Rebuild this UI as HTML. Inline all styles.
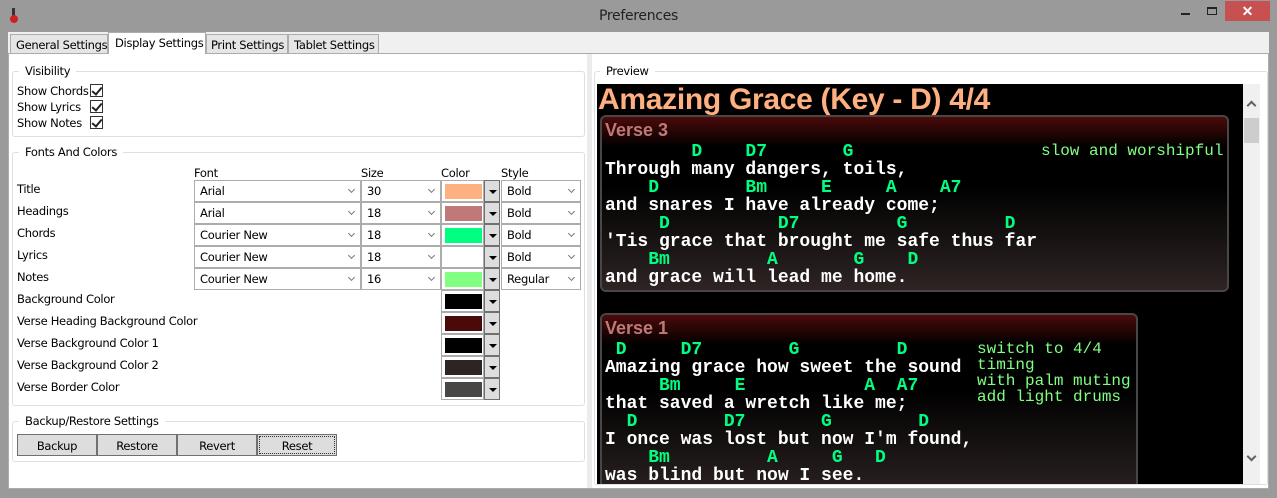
<!DOCTYPE html>
<html><head><meta charset="utf-8"><style>
*{margin:0;padding:0;box-sizing:border-box}
body{width:1277px;height:498px;background:#9a9a9a;position:relative;overflow:hidden;font-family:"Liberation Sans",sans-serif;font-size:12px;color:#000}
.a{position:absolute}
.ui{font-family:"DejaVu Sans","Liberation Sans",sans-serif;font-size:11.5px;letter-spacing:-0.3px;white-space:nowrap}
.grp{position:absolute;border:1px solid #dcdfe3;border-radius:3px}
.gl{position:absolute;background:#fff;padding:0 6px}
.cb{position:absolute;width:13px;height:13px;border:1px solid #333;background:#fff}
.cb::after{content:"";position:absolute;left:3px;top:0px;width:4px;height:8px;border:solid #222;border-width:0 2px 2px 0;transform:rotate(40deg)}
.combo{position:absolute;height:22px;border:1px solid #acacac;background:#fff;padding:3px 5px}
.combo::after{content:"";position:absolute;right:6px;top:6px;width:4px;height:4px;border:solid #777;border-width:0 1px 1px 0;transform:rotate(45deg)}
.sw{position:absolute;width:43px;height:22px;border:1px solid #acacac;background:#fff}
.sw i{position:absolute;left:3px;top:3px;width:37px;height:15px}
.dd{position:absolute;width:16px;height:22px;border:1px solid #707070;background:#ddd}
.dd::after{content:"";position:absolute;left:4px;top:9px;border:4px solid transparent;border-top:4px solid #000;border-bottom:0}
.btn{position:absolute;top:434px;height:22px;width:80px;border:1px solid #707070;background:#ddd;text-align:center;padding-top:4px}
.mono{font-family:"Liberation Mono",monospace;font-weight:bold;font-size:18px;line-height:18px;white-space:pre;color:#fff}
.ch{color:#00ff80}
.note{font-family:"Liberation Mono",monospace;font-size:16px;line-height:16px;white-space:pre;color:#80ff80}
.verse{position:absolute;border:2px solid #4a4646;border-radius:6px;background:linear-gradient(#4b0a0a 0px,#000 30px,#000 40%,#2e2424 100%);overflow:hidden}
.vh{font-family:"Liberation Sans",sans-serif;font-weight:bold;font-size:18px;color:#c07878;position:absolute;left:3px;top:3px}
</style></head><body>
<div class="a" style="left:12px;top:8px;width:3px;height:10px;background:#333"></div>
<div class="a" style="left:10px;top:15px;width:8px;height:8px;border-radius:50%;background:#c22"></div>
<div class="a ui" style="left:0;width:1277px;top:8px;text-align:center;font-size:14px;color:#222">Preferences</div>
<div class="a" style="left:1181px;top:13px;width:9px;height:2px;background:#222"></div>
<div class="a" style="left:1207px;top:7px;width:10px;height:8px;border:1px solid #222;border-top-width:2px"></div>
<div class="a" style="left:1225px;top:1px;width:45px;height:20px;background:#c75050;color:#fff;text-align:center;font-size:14px;line-height:20px;font-weight:bold">✕</div>
<div class="a" style="left:8px;top:32px;width:1261px;height:457px;background:#f0f0f0"></div>
<div class="a" style="left:8px;top:53px;width:1261px;height:436px;background:#fff;border:1px solid #acacac"></div>
<div class="a ui" style="left:10px;top:34px;width:98px;height:20px;border:1px solid #acacac;background:#e5e5e5;padding:3px 5px">General Settings</div>
<div class="a ui" style="left:108px;top:32px;width:98px;height:22px;border:1px solid #acacac;border-bottom:none;background:#fff;padding:3px 6px">Display Settings</div>
<div class="a ui" style="left:206px;top:34px;width:82px;height:20px;border:1px solid #acacac;background:#e5e5e5;padding:3px 4px">Print Settings</div>
<div class="a ui" style="left:288px;top:34px;width:91px;height:20px;border:1px solid #acacac;background:#e5e5e5;padding:3px 5px">Tablet Settings</div>
<div class="a" style="left:587px;top:54px;width:5px;height:434px;background:#ececec"></div>
<div class="grp" style="left:12px;top:71px;width:573px;height:66px"></div>
<div class="gl ui" style="left:19px;top:64px">Visibility</div>
<div class="a ui" style="left:17px;top:84px">Show Chords</div><div class="cb" style="left:90px;top:84px"></div>
<div class="a ui" style="left:17px;top:100px">Show Lyrics</div><div class="cb" style="left:90px;top:100px"></div>
<div class="a ui" style="left:17px;top:116px">Show Notes</div><div class="cb" style="left:90px;top:116px"></div>
<div class="grp" style="left:12px;top:152px;width:573px;height:254px"></div>
<div class="gl ui" style="left:19px;top:145px">Fonts And Colors</div>
<div class="a ui" style="left:194px;top:166px">Font</div>
<div class="a ui" style="left:361px;top:166px">Size</div>
<div class="a ui" style="left:441px;top:166px">Color</div>
<div class="a ui" style="left:501px;top:166px">Style</div>
<div class="a ui" style="left:17px;top:182px">Title</div>
<div class="a ui" style="left:17px;top:204px">Headings</div>
<div class="a ui" style="left:17px;top:226px">Chords</div>
<div class="a ui" style="left:17px;top:248px">Lyrics</div>
<div class="a ui" style="left:17px;top:270px">Notes</div>
<div class="a ui" style="left:17px;top:292px">Background Color</div>
<div class="a ui" style="left:17px;top:314px">Verse Heading Background Color</div>
<div class="a ui" style="left:17px;top:336px">Verse Background Color 1</div>
<div class="a ui" style="left:17px;top:358px">Verse Background Color 2</div>
<div class="a ui" style="left:17px;top:380px">Verse Border Color</div>
<div class="combo ui" style="left:194px;top:180px;width:167px">Arial</div>
<div class="combo ui" style="left:194px;top:202px;width:167px">Arial</div>
<div class="combo ui" style="left:194px;top:224px;width:167px">Courier New</div>
<div class="combo ui" style="left:194px;top:246px;width:167px">Courier New</div>
<div class="combo ui" style="left:194px;top:268px;width:167px">Courier New</div>
<div class="combo ui" style="left:361px;top:180px;width:80px">30</div>
<div class="combo ui" style="left:361px;top:202px;width:80px">18</div>
<div class="combo ui" style="left:361px;top:224px;width:80px">18</div>
<div class="combo ui" style="left:361px;top:246px;width:80px">18</div>
<div class="combo ui" style="left:361px;top:268px;width:80px">16</div>
<div class="combo ui" style="left:501px;top:180px;width:80px">Bold</div>
<div class="combo ui" style="left:501px;top:202px;width:80px">Bold</div>
<div class="combo ui" style="left:501px;top:224px;width:80px">Bold</div>
<div class="combo ui" style="left:501px;top:246px;width:80px">Bold</div>
<div class="combo ui" style="left:501px;top:268px;width:80px">Regular</div>
<div class="sw" style="left:441px;top:180px"><i style="background:#ffb080"></i></div><div class="dd" style="left:484px;top:180px"></div>
<div class="sw" style="left:441px;top:202px"><i style="background:#c07878"></i></div><div class="dd" style="left:484px;top:202px"></div>
<div class="sw" style="left:441px;top:224px"><i style="background:#00ff80"></i></div><div class="dd" style="left:484px;top:224px"></div>
<div class="sw" style="left:441px;top:246px"><i style="background:#fff"></i></div><div class="dd" style="left:484px;top:246px"></div>
<div class="sw" style="left:441px;top:268px"><i style="background:#80ff80"></i></div><div class="dd" style="left:484px;top:268px"></div>
<div class="sw" style="left:441px;top:290px"><i style="background:#000"></i></div><div class="dd" style="left:484px;top:290px"></div>
<div class="sw" style="left:441px;top:312px"><i style="background:#4b0a0a"></i></div><div class="dd" style="left:484px;top:312px"></div>
<div class="sw" style="left:441px;top:334px"><i style="background:#000"></i></div><div class="dd" style="left:484px;top:334px"></div>
<div class="sw" style="left:441px;top:356px"><i style="background:#2e2424"></i></div><div class="dd" style="left:484px;top:356px"></div>
<div class="sw" style="left:441px;top:378px"><i style="background:#4a4646"></i></div><div class="dd" style="left:484px;top:378px"></div>
<div class="grp" style="left:12px;top:421px;width:573px;height:41px"></div>
<div class="gl ui" style="left:19px;top:414px">Backup/Restore Settings</div>
<div class="btn ui" style="left:17px">Backup</div>
<div class="btn ui" style="left:97px">Restore</div>
<div class="btn ui" style="left:177px">Revert</div>
<div class="btn ui" style="left:257px;outline:1px dotted #333;outline-offset:-3px">Reset</div>
<div class="grp" style="left:594px;top:71px;width:674px;height:414px"></div>
<div class="gl ui" style="left:600px;top:64px">Preview</div>
<div class="a" style="left:597px;top:84px;width:646px;height:400px;background:#000;overflow:hidden">
  <div class="a" style="left:1px;top:-1px;font-weight:bold;font-size:30px;color:#ffb080;letter-spacing:-0.3px">Amazing Grace (Key - D) 4/4</div>
  <div class="verse" style="left:3px;top:31px;width:629px;height:177px">
    <div class="vh">Verse 3</div>
    <div class="a mono" style="left:3px;top:26px"><span class="ch">        D    D7       G</span>
Through many dangers, toils,
<span class="ch">    D        Bm     E     A    A7</span>
and snares I have already come;
<span class="ch">     D          D7         G         D</span>
'Tis grace that brought me safe thus far
<span class="ch">    Bm         A       G    D</span>
and grace will lead me home.</div>
    <div class="a note" style="left:439px;top:26px">slow and worshipful</div>
  </div>
  <div class="verse" style="left:3px;top:229px;width:538px;height:190px">
    <div class="vh">Verse 1</div>
    <div class="a mono" style="left:3px;top:26px"><span class="ch"> D     D7        G         D</span>
Amazing grace how sweet the sound
<span class="ch">     Bm     E           A  A7</span>
that saved a wretch like me;
<span class="ch">  D        D7       G        D</span>
I once was lost but now I'm found,
<span class="ch">    Bm         A     G   D</span>
was blind but now I see.</div>
    <div class="a note" style="left:375px;top:26px">switch to 4/4
timing
with palm muting
add light drums</div>
  </div>
</div>
<div class="a" style="left:1243px;top:84px;width:17px;height:400px;background:#f0f0f0"></div>
<div class="a" style="left:1248px;top:102px;width:7px;height:7px;border:solid #606060;border-width:2px 0 0 2px;transform:rotate(45deg)"></div>
<div class="a" style="left:1244px;top:118px;width:15px;height:25px;background:#cdcdcd"></div>
<div class="a" style="left:1248px;top:453px;width:7px;height:7px;border:solid #606060;border-width:0 2px 2px 0;transform:rotate(45deg)"></div>
</body></html>
